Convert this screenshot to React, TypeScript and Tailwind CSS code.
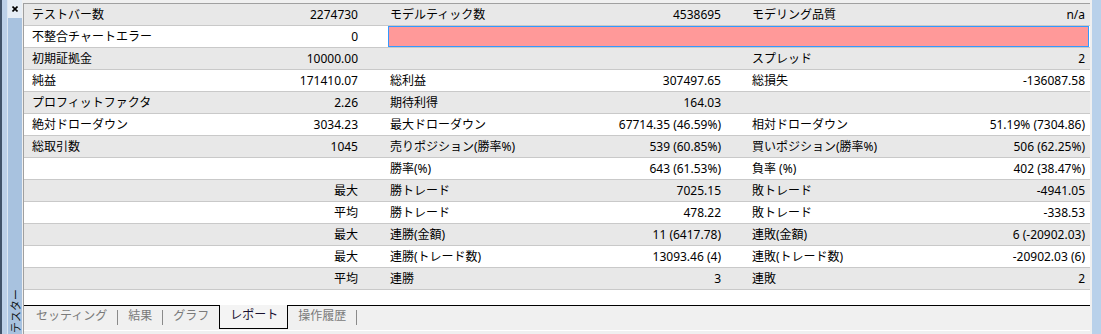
import React from "react";

type Cell = { label?: string; value?: string };

const ROWS: Cell[][] = [
  [{ label: "テストバー数", value: "2274730" }, { label: "モデルティック数", value: "4538695" }, { label: "モデリング品質", value: "n/a" }],
  [{ label: "不整合チャートエラー", value: "0" }],
  [{ label: "初期証拠金", value: "10000.00" }, {}, { label: "スプレッド", value: "2" }],
  [{ label: "純益", value: "171410.07" }, { label: "総利益", value: "307497.65" }, { label: "総損失", value: "-136087.58" }],
  [{ label: "プロフィットファクタ", value: "2.26" }, { label: "期待利得", value: "164.03" }, {}],
  [{ label: "絶対ドローダウン", value: "3034.23" }, { label: "最大ドローダウン", value: "67714.35 (46.59%)" }, { label: "相対ドローダウン", value: "51.19% (7304.86)" }],
  [{ label: "総取引数", value: "1045" }, { label: "売りポジション(勝率%)", value: "539 (60.85%)" }, { label: "買いポジション(勝率%)", value: "506 (62.25%)" }],
  [{}, { label: "勝率(%)", value: "643 (61.53%)" }, { label: "負率 (%)", value: "402 (38.47%)" }],
  [{ value: "最大" }, { label: "勝トレード", value: "7025.15" }, { label: "敗トレード", value: "-4941.05" }],
  [{ value: "平均" }, { label: "勝トレード", value: "478.22" }, { label: "敗トレード", value: "-338.53" }],
  [{ value: "最大" }, { label: "連勝(金額)", value: "11 (6417.78)" }, { label: "連敗(金額)", value: "6 (-20902.03)" }],
  [{ value: "最大" }, { label: "連勝(トレード数)", value: "13093.46 (4)" }, { label: "連敗(トレード数)", value: "-20902.03 (6)" }],
  [{ value: "平均" }, { label: "連勝", value: "3" }, { label: "連敗", value: "2" }],
  [{}, {}, {}],
];

const COLS = [
  "w-[360px] pl-[8px] pr-[26px]",
  "w-[362px] pl-[6px] pr-[25px]",
  "flex-1 pl-[6px] pr-[5px]",
];

function Row({ cells, index }: { cells: Cell[]; index: number }) {
  const bg = index % 2 === 0 ? "bg-[#e8e8e8]" : "bg-white";
  return (
    <div className={`flex h-[22px] shrink-0 border-b border-[#c9c9c9] ${bg}`}>
      {cells.length === 1 ? (
        <>
          <div className={`flex items-center justify-between ${COLS[0]}`}>
            <span>{cells[0].label}</span>
            <span>{cells[0].value}</span>
          </div>
          <div className="flex-1 ml-[4px] mr-[1px] bg-[#ff9999] border border-[#3399ff]" />
        </>
      ) : (
        cells.map((c, i) => (
          <div key={i} className={`flex items-center justify-between ${COLS[i]}`}>
            <span>{c.label}</span>
            <span>{c.value}</span>
          </div>
        ))
      )}
    </div>
  );
}

function Tabs() {
  const sep = <span className="w-px h-[15px] bg-[#8a8a8a] mx-[10px]" />;
  return (
    <div className="h-[29px] shrink-0 flex flex-col">
      <div className="flex items-start h-[24px] border-t border-black pl-[12px] text-[#7a7a7a]">
        <span className="mt-[4px]">セッティング</span>
        <span className="mt-[4px] flex items-center">{sep}</span>
        <span className="mt-[4px]">結果</span>
        <span className="mt-[4px] flex items-center">{sep}</span>
        <span className="mt-[4px]">グラフ</span>
        <div className="ml-[10px] -mt-px h-[24px] border-x border-b border-black bg-[#f4f4f4] pl-[10px] pr-[9px] pt-[4px] text-[#1a1030]">
          レポート
        </div>
        <span className="mt-[4px] ml-[10px]">操作履歴</span>
        <span className="mt-[4px] flex items-center">{sep}</span>
      </div>
      <div className="h-px bg-white mt-auto" />
      <div className="h-[3px] bg-[#f0f0f0]" />
    </div>
  );
}

export default function App() {
  return (
    <div
      className="flex w-[1101px] h-[334px] overflow-hidden bg-[#f0f0f0] text-[12px] leading-none text-black"
      style={{ fontFamily: '"Noto Sans", "Noto Sans CJK JP", sans-serif' }}
    >
      {/* left window frame with caption strip */}
      <div className="w-[2px] bg-[#41536a]" />
      <div className="w-[5px] bg-[#bcd0e8]" />
      <div className="w-px bg-[#dce7f3]" />
      <div className="w-[14px] flex flex-col">
        <div className="h-[18px] bg-[#e6edf5] flex items-start pt-[6px] pl-[4px]">
          <svg width="6" height="6" viewBox="0 0 6 6">
            <path d="M0.5 0.5 L5.5 5.5 M5.5 0.5 L0.5 5.5" stroke="#000" strokeWidth="1.6" />
          </svg>
        </div>
        <div className="flex-1 bg-[#a8c2df] flex items-end justify-center pb-px">
          <span className="text-[11px] [writing-mode:vertical-rl] [text-orientation:sideways] rotate-180 text-[#101820]">
            テスター
          </span>
        </div>
      </div>
      <div className="w-px bg-[#f0f0f0]" />

      {/* main area */}
      <div className="w-[1067px] flex flex-col pt-[3px]">
        <div className="flex-1 flex flex-col border-t border-l border-[#a0a0a0] min-h-0">
          <div className="flex-1 flex flex-col overflow-hidden min-h-0">
            {ROWS.map((r, i) => (
              <Row key={i} cells={r} index={i} />
            ))}
          </div>
          <Tabs />
        </div>
      </div>

      {/* right frame */}
      <div className="w-[2px] bg-[#f0f0f0]" />
      <div className="flex-1 bg-[#b9d1ea]" />
    </div>
  );
}
